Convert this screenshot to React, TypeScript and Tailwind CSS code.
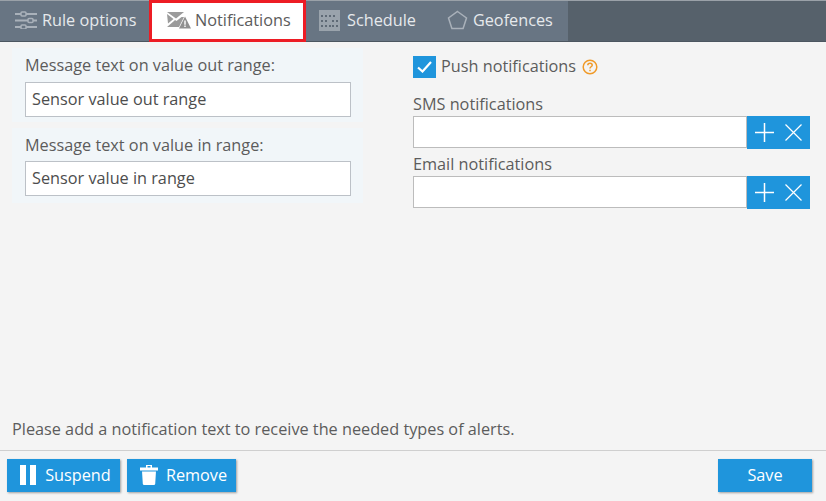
import React from "react";

const font = "font-['Open_Sans','Noto_Sans',sans-serif]";

function SlidersIcon() {
  return (
    <svg width="22" height="18" viewBox="0 0 22 18" className="shrink-0" fill="#687583" stroke="#a9b1ba" strokeWidth="2">
      <path d="M0 3h22M0 9.500h22M0 16h22" />
      <rect x="6" y="1" width="5" height="4" rx="1" strokeWidth="1.500" />
      <rect x="13" y="7.500" width="5" height="4" rx="1" strokeWidth="1.500" />
      <rect x="6" y="14" width="5" height="4" rx="1" strokeWidth="1.500" />
    </svg>
  );
}

function MailAlertIcon() {
  return (
    <svg width="24" height="17" viewBox="0 0 24 17" className="shrink-0">
      <path d="M0 0h17l-8 6.500z M0 2l6.500 5L1 11.500z M8 8l1.500 1 5-4 2.500 0-5 10H0l7-6z" fill="#9b9b9b" />
      <path d="M18 4.500l6 12H12z" fill="#8f8f8f" />
      <path d="M17.300 8.500h1.400v4.300h-1.400zM17.300 13.600h1.400v1.400h-1.400z" fill="#fff" />
    </svg>
  );
}

function CalendarIcon() {
  return (
    <svg width="21" height="21" viewBox="0 0 21 21" className="shrink-0">
      <rect width="21" height="21" fill="#9aa3ac" />
      <path
        d="M2 5h2v2H2zM6 5h2v2H6zM10 5h2v2h-2zM14 5h2v2h-2zM2 10h2v2H2zM6 10h2v2H6zM13 10h2v2h-2zM17 10h2v2h-2zM2 15h2v2H2zM6 15h2v2H6zM10 15h2v2h-2zM13 15h2v2h-2zM17 15h2v2h-2z"
        fill="#5f6a76"
      />
    </svg>
  );
}

function PentagonIcon() {
  return (
    <svg width="21" height="21" viewBox="0 0 21 21" className="shrink-0" fill="none" stroke="#a9b1ba" strokeWidth="1.500">
      <path d="M10.500 1.500l9 6.500-3.400 10.500H4.900L1.500 8z" />
    </svg>
  );
}

function PauseIcon() {
  return (
    <svg width="16" height="20" viewBox="0 0 16 20" className="shrink-0" fill="#fff">
      <rect x="0" y="0" width="6" height="20" />
      <rect x="10" y="0" width="6" height="20" />
    </svg>
  );
}

function TrashIcon() {
  return (
    <svg width="18" height="20" viewBox="0 0 18 20" className="shrink-0" fill="#fff">
      <path fillRule="evenodd" d="M6 0h6v2.500h6v3H0v-3h6zM7.500 1v1.500h3V1z" />
      <path d="M2 6.500h14l-.8 12.200q-.1 1.300-1.300 1.300H4.100q-1.200 0-1.300-1.300z" />
    </svg>
  );
}

function PlusXButtons() {
  return (
    <div className="flex h-[33px] w-[63px] shrink-0 items-center justify-center gap-[11px] bg-[#1f95dc]">
      <svg width="19" height="19" viewBox="0 0 19 19" stroke="#fff" strokeWidth="1.500">
        <path d="M9.500 0v19M0 9.500h19" />
      </svg>
      <svg width="17" height="17" viewBox="0 0 17 17" stroke="#fff" strokeWidth="1.200">
        <path d="M0.500 0.500l16 16M16.500 0.500l-16 16" />
      </svg>
    </div>
  );
}

function TextBlock({ label, value, last }: { label: string; value: string; last?: boolean }) {
  return (
    <div className={`flex w-[351px] flex-col bg-[#f1f6f9] px-[13px] pt-[5px] ${last ? "h-[75px] gap-[4px]" : "h-[74px] gap-[5px]"}`}>
      <div className="h-[24px] text-[16.25px] leading-[24px] text-[#5c5c5c]">{label}</div>
      <div className="flex h-[35px] w-[326px] items-center border border-[#bcc1c7] bg-white pb-[1px] pl-[6px] text-[16.25px] text-[#4d4d4d]">
        {value}
      </div>
    </div>
  );
}

function ContactField({ label }: { label: string }) {
  return (
    <div className="flex flex-col">
      <div className="h-[22px] text-[16.25px] leading-[21px] text-[#5c5c5c]">{label}</div>
      <div className="flex w-[397px]">
        <div className="h-[32px] flex-1 border border-[#bcbcbc] bg-white" />
        <PlusXButtons />
      </div>
    </div>
  );
}

function FooterButton({ icon, label, className }: { icon?: React.ReactNode; label: string; className: string }) {
  return (
    <button className={`flex h-[33px] items-center justify-center bg-[#1f95dc] pb-[1px] text-[16.25px] text-white shadow-[1px_1px_2px_rgba(0,0,0,0.35)] ${className}`}>
      {icon}
      {label}
    </button>
  );
}

export default function App() {
  return (
    <div className={`${font} flex h-[501px] w-[826px] flex-col overflow-hidden bg-[#f4f4f4]`}>
      <div className="flex h-[42px] shrink-0 border-t-[1px] border-b-[1px] border-t-[#9aa1a8] border-b-[#4c5660] bg-[#56616b]">
        <div className="flex w-[149px] items-center gap-[5px] bg-[#687583] pb-[2px] pl-[15px] text-[16.25px] text-[#e6e9ec]">
          <SlidersIcon />
          Rule options
        </div>
        <div className="-mt-px -mb-px flex h-[42px] w-[157px] items-center gap-[4px] border-[3px] border-[#ed1c24] bg-white pb-[2px] pl-[15px] text-[16.25px] text-[#5c5c5c]">
          <MailAlertIcon />
          Notifications
        </div>
        <div className="flex w-[262px] items-center bg-[#687583] pb-[2px] text-[16.25px] text-[#e6e9ec]">
          <div className="flex items-center gap-[7px] pl-[13px]">
            <CalendarIcon />
            Schedule
          </div>
          <div className="ml-[31px] flex items-center gap-[5px]">
            <PentagonIcon />
            Geofences
          </div>
        </div>
      </div>

      <div className="flex flex-1 pl-[12px] pt-[6px]">
        <div className="flex w-[401px] flex-col gap-[6px]">
          <TextBlock label="Message text on value out range:" value="Sensor value out range" />
          <TextBlock label="Message text on value in range:" value="Sensor value in range" last />
        </div>
        <div className="flex flex-col">
          <div className="mt-[8px] flex h-[22px] items-center gap-[5px] text-[16.25px] text-[#5c5c5c]">
            <div className="flex h-[22px] w-[23px] items-center justify-center bg-[#1f95dc]">
              <svg width="15" height="12" viewBox="0 0 15 12" fill="none" stroke="#fff" strokeWidth="2.200">
                <path d="M1 6.500l4.500 4L14 1" />
              </svg>
            </div>
            <span className="-mt-[2px]">Push notifications</span>
            <svg width="16" height="16" viewBox="0 0 16 16" className="ml-px" fill="none" stroke="#f09a28" strokeWidth="1.500">
              <circle cx="8" cy="8" r="6.800" />
              <path d="M5.800 6.300c0-1.300 1-2 2.200-2s2.200.8 2.200 1.900c0 1.600-2.200 1.500-2.200 3.300" />
              <path d="M8 10.700v1.500" />
            </svg>
          </div>
          <div className="mt-[16px] flex flex-col gap-[5px]">
            <ContactField label="SMS notifications" />
            <ContactField label="Email notifications" />
          </div>
        </div>
      </div>

      <div className="mb-[9px] h-[23px] shrink-0 pl-[12px] text-[16.25px] leading-[23px] text-[#5c5c5c]">
        Please add a notification text to receive the needed types of alerts.
      </div>

      <div className="flex h-[51px] shrink-0 items-start border-t border-[#cfcfcf] pl-[7px] pr-[14px] pt-[8px]">
        <div className="flex gap-[7px]">
          <FooterButton icon={<PauseIcon />} label="Suspend" className="w-[113px] gap-[9px] pl-[4px]" />
          <FooterButton icon={<TrashIcon />} label="Remove" className="w-[109px] gap-[8px] pl-[4px]" />
        </div>
        <div className="ml-auto">
          <FooterButton label="Save" className="w-[94px]" />
        </div>
      </div>
    </div>
  );
}
